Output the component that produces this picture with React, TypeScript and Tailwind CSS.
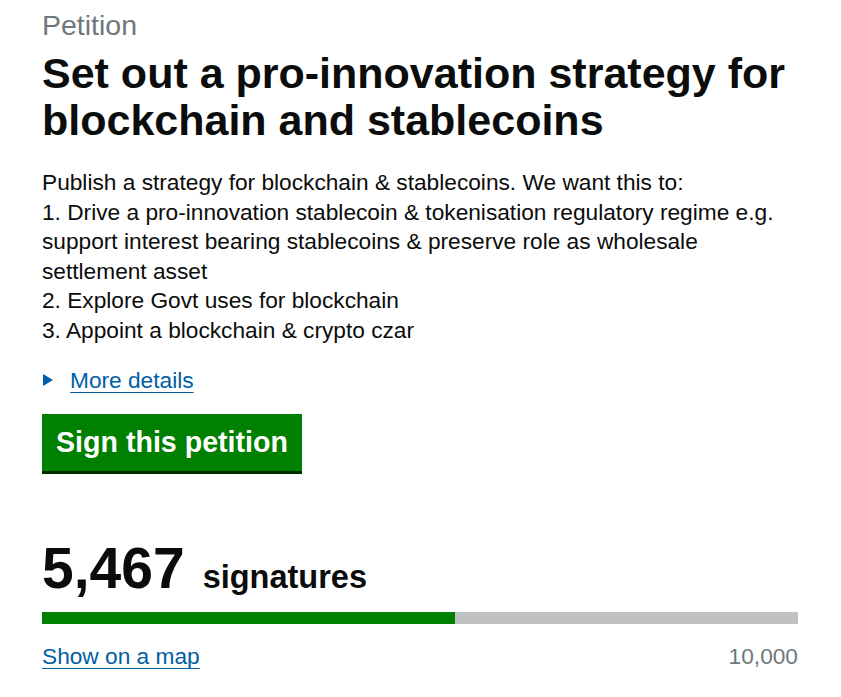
export default function App() {
  const count = 5467;
  const target = 10000;
  const pct = (count / target) * 100;

  return (
    <main className="min-h-screen bg-white px-[42px] pt-[7px] font-['Liberation_Sans',Arial,sans-serif] text-[#0b0c0c]">
      <div className="w-[756px]">
        <span className="block text-[28.5px] leading-[36px] text-[#6f777b]">Petition</span>
        <h1 className="mt-[7px] text-[43px] font-bold leading-[47px]">
          Set out a pro-innovation strategy for blockchain and stablecoins
        </h1>

        <div className="mt-[24px] text-[22.7px] leading-[29.6px]">
          <p>Publish a strategy for blockchain &amp; stablecoins. We want this to:</p>
          <p>
            1. Drive a pro-innovation stablecoin &amp; tokenisation regulatory regime e.g. support
            interest bearing stablecoins &amp; preserve role as wholesale settlement asset
          </p>
          <p>2. Explore Govt uses for blockchain</p>
          <p>3. Appoint a blockchain &amp; crypto czar</p>
        </div>

        <details className="mt-[19px]">
          <summary className="flex cursor-pointer list-none items-center gap-[17px] text-[22.7px] leading-[30px] text-[#005ea5]">
            <svg width="10" height="12" viewBox="0 0 10 12" className="ml-[1px]">
              <path d="M0 0 L10 6 L0 12 Z" fill="#005ea5" />
            </svg>
            <span className="underline decoration-1 underline-offset-[4px]">More details</span>
          </summary>
        </details>

        <button className="mt-[19px] bg-[#008000] px-[14px] pb-[10px] pt-[9px] text-[28.6px] font-bold leading-[38px] text-white shadow-[0_3px_0_#002d00]">
          Sign this petition
        </button>

        <div className="mt-[67px] flex items-baseline gap-[18px]">
          <span className="text-[57px] font-bold leading-[60px]">5,467</span>
          <span className="text-[32.5px] font-bold">signatures</span>
        </div>

        <div className="mt-[11px] h-[12px] w-full bg-[#bfc1c3]">
          <div className="h-full bg-[#008000]" style={{ width: `${pct}%` }} />
        </div>

        <div className="mt-[17px] flex items-center justify-between text-[22.7px] leading-[30px]">
          <a href="#" className="text-[#005ea5] underline decoration-1 underline-offset-[4px]">
            Show on a map
          </a>
          <span className="text-[#6f777b]">10,000</span>
        </div>
      </div>
    </main>
  );
}
